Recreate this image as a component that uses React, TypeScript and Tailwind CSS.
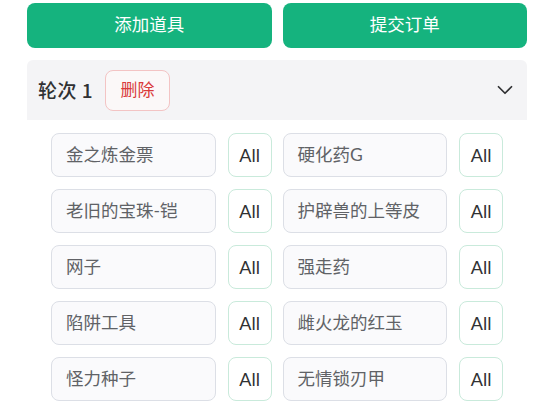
import { ChevronDown } from "lucide-react";

const ITEMS = [
  ["金之炼金票", "硬化药G"],
  ["老旧的宝珠-铠", "护辟兽的上等皮"],
  ["网子", "强走药"],
  ["陷阱工具", "雌火龙的红玉"],
  ["怪力种子", "无情锁刃甲"],
];

function ItemField({ name }: { name: string }) {
  return (
    <div className="flex items-center gap-3">
      <div className="flex h-[44px] w-[165px] items-center rounded-lg border border-[#dcdfe6] bg-[#fafafc] px-[14px] text-[17.5px] text-[#606266]">
        {name}
      </div>
      <button className="flex h-[44px] w-[44px] items-center justify-center rounded-lg border border-[#c9eadb] bg-white text-[18px] text-[#303133]">
        All
      </button>
    </div>
  );
}

export default function App() {
  return (
    <div
      className="min-h-screen w-[550px] bg-white pl-[27px] pt-[3px]"
      style={{ fontFamily: "Lato, 'Noto Sans CJK SC', sans-serif" }}
    >
      <div className="w-[500px]">
        {/* Actions */}
        <div className="flex gap-[11px]">
          <button className="h-[45px] flex-1 rounded-lg bg-[#15b37e] text-[17.5px] text-white">
            添加道具
          </button>
          <button className="h-[45px] flex-1 rounded-lg bg-[#15b37e] text-[17.5px] text-white">
            提交订单
          </button>
        </div>

        {/* Round header */}
        <div className="mt-[12px] flex h-[60px] items-center rounded-t-md bg-[#f4f4f6] pl-[11px] pr-[9px]">
          <span
            className="text-[19px] font-medium tracking-[0.5px] text-[#303133]"
            style={{ fontFamily: "'Noto Sans CJK SC', sans-serif" }}
          >
            轮次 1
          </span>
          <button className="ml-[12px] flex h-[41px] w-[65px] items-center justify-center rounded-lg border border-[#f3c4c4] bg-[#fbf8f8] text-[17px] text-[#d93a3a]">
            删除
          </button>
          <ChevronDown className="ml-auto h-[26px] w-[26px] text-[#303133]" strokeWidth={1.6} />
        </div>

        {/* Items */}
        <div className="grid grid-cols-2 gap-x-[11px] gap-y-[12px] px-[24px] pt-[13px]">
          {ITEMS.map(([a, b]) => (
            <>
              <ItemField key={a} name={a} />
              <ItemField key={b} name={b} />
            </>
          ))}
        </div>
      </div>
    </div>
  );
}
